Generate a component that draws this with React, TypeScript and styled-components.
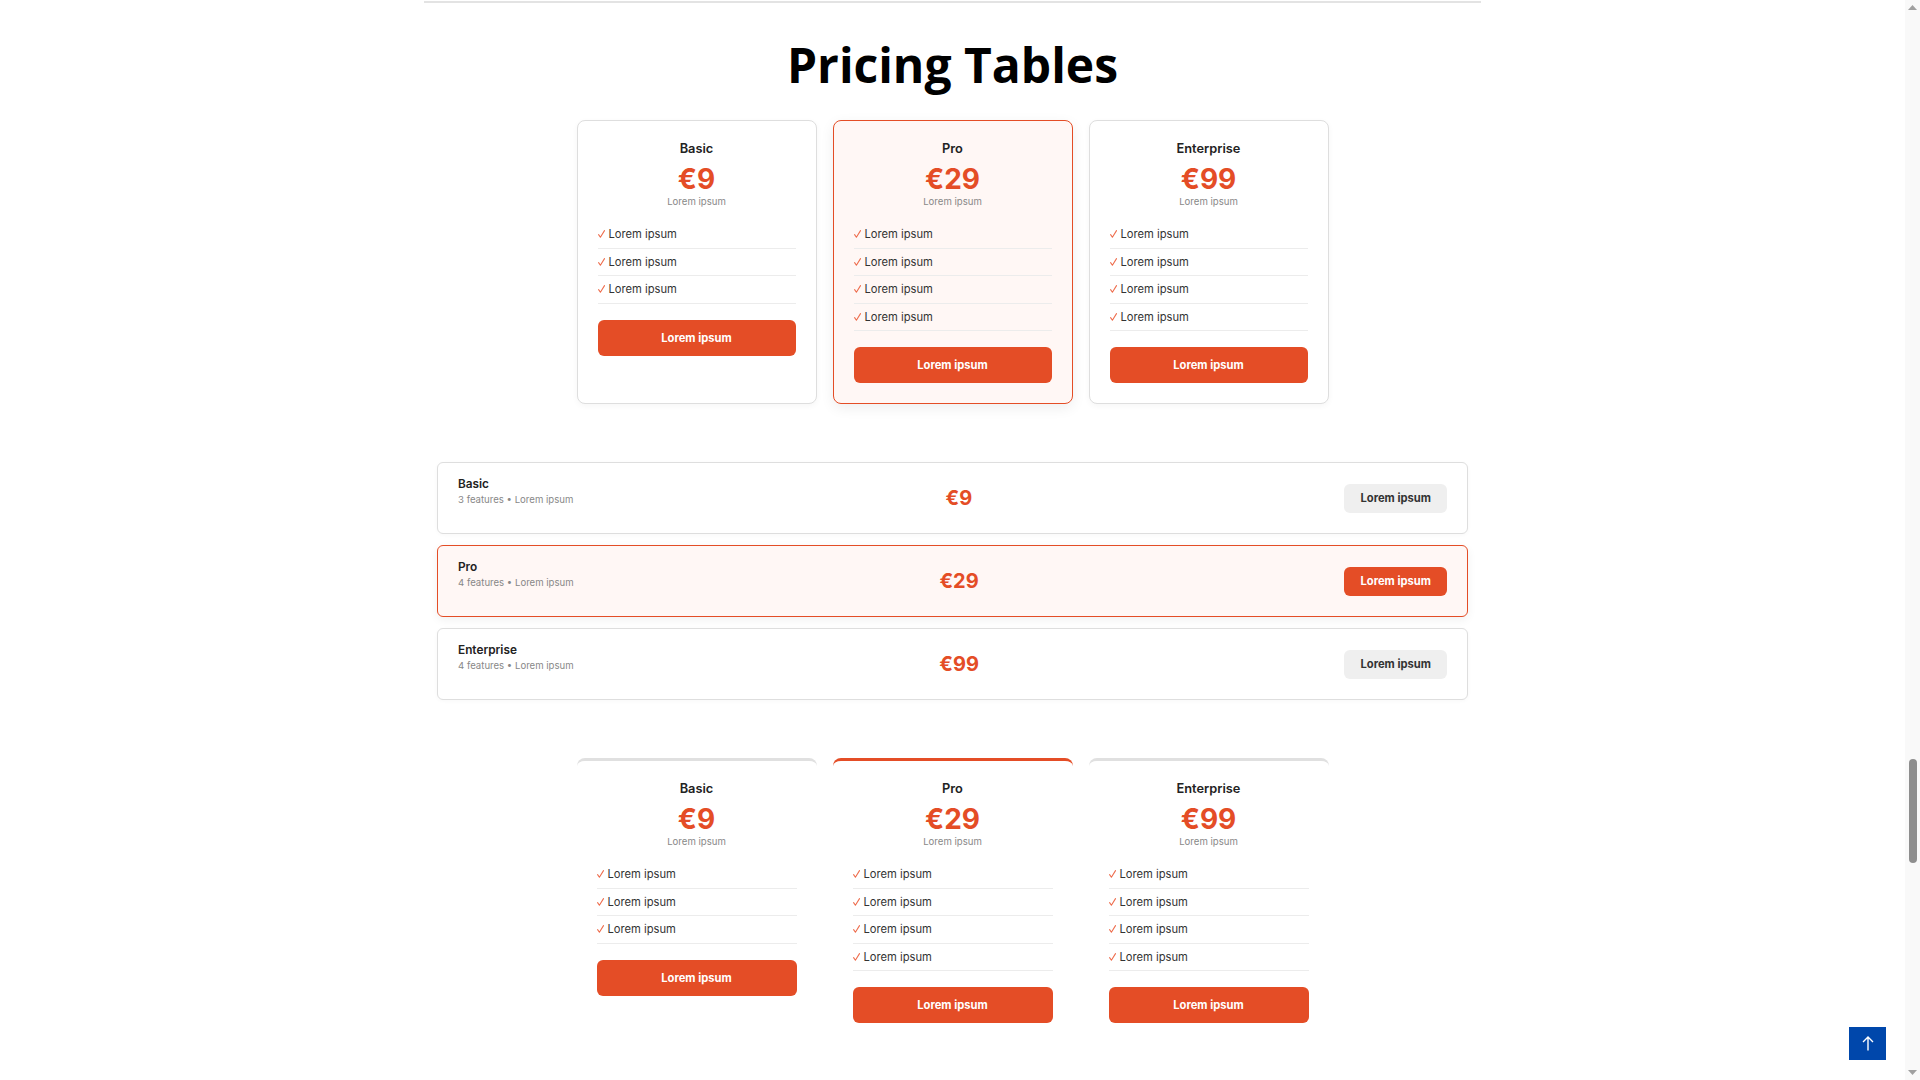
import React from "react";
import styled, { createGlobalStyle, css } from "styled-components";

const ORANGE = "#e44d26";
const FONT = `Inter, "Liberation Sans", sans-serif`;

const GlobalStyle = createGlobalStyle`
  html, body { margin: 0; padding: 0; background: #fff; overflow: hidden; }
  body { font-family: ${FONT}; color: #222; }
  *, *::before, *::after { box-sizing: border-box; }
`;

const Shell = styled.div`
  display: flex;
  height: 100vh;
  overflow: hidden;
`;

const Page = styled.main`
  flex: 1;
  min-width: 0;
  display: flex;
  flex-direction: column;
  align-items: center;
`;

const TopRule = styled.hr`
  width: 1057px;
  height: 2px;
  margin: 1px 0 0;
  border: 0;
  background: #e3e3e3;
`;

const Title = styled.h1`
  font-family: "Open Sans", "Noto Sans", sans-serif;
  font-weight: 700;
  font-size: 48px;
  line-height: 60px;
  margin: 32px 0 25px;
  color: #000;
`;

const CardGrid = styled.section<{ $mt?: number }>`
  display: grid;
  grid-template-columns: repeat(3, 240px);
  gap: 16px;
  margin-top: ${(p) => p.$mt ?? 0}px;
`;

type Kind = "boxed" | "topline";

const Card = styled.div<{ $kind: Kind; $featured?: boolean }>`
  display: flex;
  flex-direction: column;
  padding: 20px;
  border-radius: 8px;
  background: #fff;
  ${(p) =>
    p.$kind === "boxed"
      ? css`
          border: 1px solid ${p.$featured ? ORANGE : "#dedede"};
          background: ${p.$featured ? "#fff7f5" : "#fff"};
          box-shadow: ${p.$featured
            ? "0 4px 14px rgba(0,0,0,0.07)"
            : "0 2px 6px rgba(0,0,0,0.04)"};
        `
      : css`
          border-top: 3px solid ${p.$featured ? ORANGE : "#e0e0e0"};
        `}
`;

const PlanName = styled.div`
  font-size: 12.8px;
  font-weight: 600;
  line-height: 16px;
  text-align: center;
  color: #222;
`;

const Price = styled.div`
  font-size: 28px;
  font-weight: 700;
  line-height: 34px;
  color: ${ORANGE};
  text-align: center;
  margin-top: 5px;
`;

const Period = styled.div`
  font-size: 9.6px;
  line-height: 12px;
  color: #888;
  text-align: center;
`;

const FeatureList = styled.ul`
  list-style: none;
  margin: 13px 0 0;
  padding: 0;
`;

const Feature = styled.li`
  font-size: 11.2px;
  line-height: 14.5px;
  padding: 6px 0;
  border-bottom: 1px solid #ececec;
  color: #333;
  display: flex;
  align-items: center;
`;

const CheckIcon = styled.svg`
  width: 7px;
  height: 8px;
  margin-right: 4px;
  flex-shrink: 0;
`;

const CtaButton = styled.button`
  margin-top: 16px;
  height: 36px;
  width: 100%;
  border: 0;
  border-radius: 6px;
  background: ${ORANGE};
  color: #fff;
  font-family: ${FONT};
  font-size: 11.2px;
  font-weight: 700;
  cursor: pointer;
`;

const RowList = styled.section`
  width: 1031px;
  margin-top: 58px;
  display: flex;
  flex-direction: column;
  gap: 11px;
`;

const Row = styled.div<{ $featured?: boolean }>`
  height: 72px;
  padding: 0 20px;
  display: flex;
  align-items: center;
  justify-content: space-between;
  border-radius: 6px;
  border: 1px solid ${(p) => (p.$featured ? ORANGE : "#dedede")};
  background: ${(p) => (p.$featured ? "#fff7f5" : "#fff")};
  box-shadow: ${(p) =>
    p.$featured ? "0 3px 10px rgba(0,0,0,0.06)" : "0 1px 4px rgba(0,0,0,0.03)"};
`;

const RowInfo = styled.div`
  display: flex;
  flex-direction: column;
  padding-bottom: 14px;
`;

const RowName = styled.div`
  font-size: 11.8px;
  font-weight: 600;
  line-height: 16px;
  color: #222;
`;

const RowMeta = styled.div`
  font-size: 9.6px;
  line-height: 13px;
  margin-top: 1px;
  color: #888;
`;

const RowPrice = styled.div`
  font-size: 20px;
  font-weight: 700;
  color: ${ORANGE};
`;

const RowButton = styled.button<{ $primary?: boolean }>`
  height: 29px;
  padding: 0 16px;
  border: 0;
  border-radius: 6px;
  font-family: ${FONT};
  font-size: 11.2px;
  font-weight: 700;
  background: ${(p) => (p.$primary ? ORANGE : "#efefef")};
  color: ${(p) => (p.$primary ? "#fff" : "#333")};
  cursor: pointer;
`;

const ScrollTrack = styled.div`
  width: 15px;
  height: 100vh;
  flex-shrink: 0;
  background: #f9f9f9;
  display: flex;
  flex-direction: column;
  align-items: center;
`;

const ArrowCell = styled.div`
  height: 15px;
  width: 15px;
  display: flex;
  align-items: center;
  justify-content: center;
`;

const Thumb = styled.div`
  width: 8px;
  height: 104px;
  margin-top: 744px;
  border-radius: 4px;
  background: #8e8e8e;
`;

const TrackFill = styled.div`
  flex: 1;
`;

const ToTop = styled.button`
  position: fixed;
  right: 34px;
  bottom: 20px;
  width: 37px;
  height: 33px;
  border: 0;
  padding: 0;
  background: #0047ab;
  display: flex;
  align-items: center;
  justify-content: center;
  cursor: pointer;
`;

type Plan = { name: string; price: string; features: number };

const plans: Plan[] = [
  { name: "Basic", price: "€9", features: 3 },
  { name: "Pro", price: "€29", features: 4 },
  { name: "Enterprise", price: "€99", features: 4 },
];

function Check() {
  return (
    <CheckIcon viewBox="0 0 7 8" aria-hidden="true">
      <path
        d="M0.6 4.6 L2.4 7.2 L6.5 0.6"
        stroke="#ee6b4b"
        strokeWidth="1.05"
        fill="none"
        strokeLinecap="round"
        strokeLinejoin="round"
      />
    </CheckIcon>
  );
}

function PlanCard({ plan, kind }: { plan: Plan; kind: Kind }) {
  return (
    <Card $kind={kind} $featured={plan.name === "Pro"}>
      <PlanName>{plan.name}</PlanName>
      <Price>{plan.price}</Price>
      <Period>Lorem ipsum</Period>
      <FeatureList>
        {Array.from({ length: plan.features }).map((_, i) => (
          <Feature key={i}>
            <Check />
            Lorem ipsum
          </Feature>
        ))}
      </FeatureList>
      <CtaButton>Lorem ipsum</CtaButton>
    </Card>
  );
}

export default function App() {
  return (
    <>
      <GlobalStyle />
      <Shell>
        <Page>
          <TopRule />
          <Title>Pricing Tables</Title>
          <CardGrid>
            {plans.map((p) => (
              <PlanCard key={p.name} plan={p} kind="boxed" />
            ))}
          </CardGrid>
          <RowList>
            {plans.map((p) => (
              <Row key={p.name} $featured={p.name === "Pro"}>
                <RowInfo>
                  <RowName>{p.name}</RowName>
                  <RowMeta>{p.features} features • Lorem ipsum</RowMeta>
                </RowInfo>
                <RowPrice>{p.price}</RowPrice>
                <RowButton $primary={p.name === "Pro"}>Lorem ipsum</RowButton>
              </Row>
            ))}
          </RowList>
          <CardGrid $mt={58}>
            {plans.map((p) => (
              <PlanCard key={p.name} plan={p} kind="topline" />
            ))}
          </CardGrid>
        </Page>
        <ScrollTrack>
          <ArrowCell>
            <svg width="9" height="5" viewBox="0 0 9 5">
              <path d="M0 5 L4.5 0 L9 5 Z" fill="#a0a0a0" />
            </svg>
          </ArrowCell>
          <Thumb />
          <TrackFill />
          <ArrowCell>
            <svg width="9" height="5" viewBox="0 0 9 5">
              <path d="M0 0 L4.5 5 L9 0 Z" fill="#a0a0a0" />
            </svg>
          </ArrowCell>
        </ScrollTrack>
        <ToTop aria-label="Back to top">
          <svg width="12" height="15" viewBox="0 0 12 15">
            <path
              d="M6 14.5 V1 M1 6 L6 1 L11 6"
              stroke="#fff"
              strokeWidth="1.4"
              fill="none"
            />
          </svg>
        </ToTop>
      </Shell>
    </>
  );
}
